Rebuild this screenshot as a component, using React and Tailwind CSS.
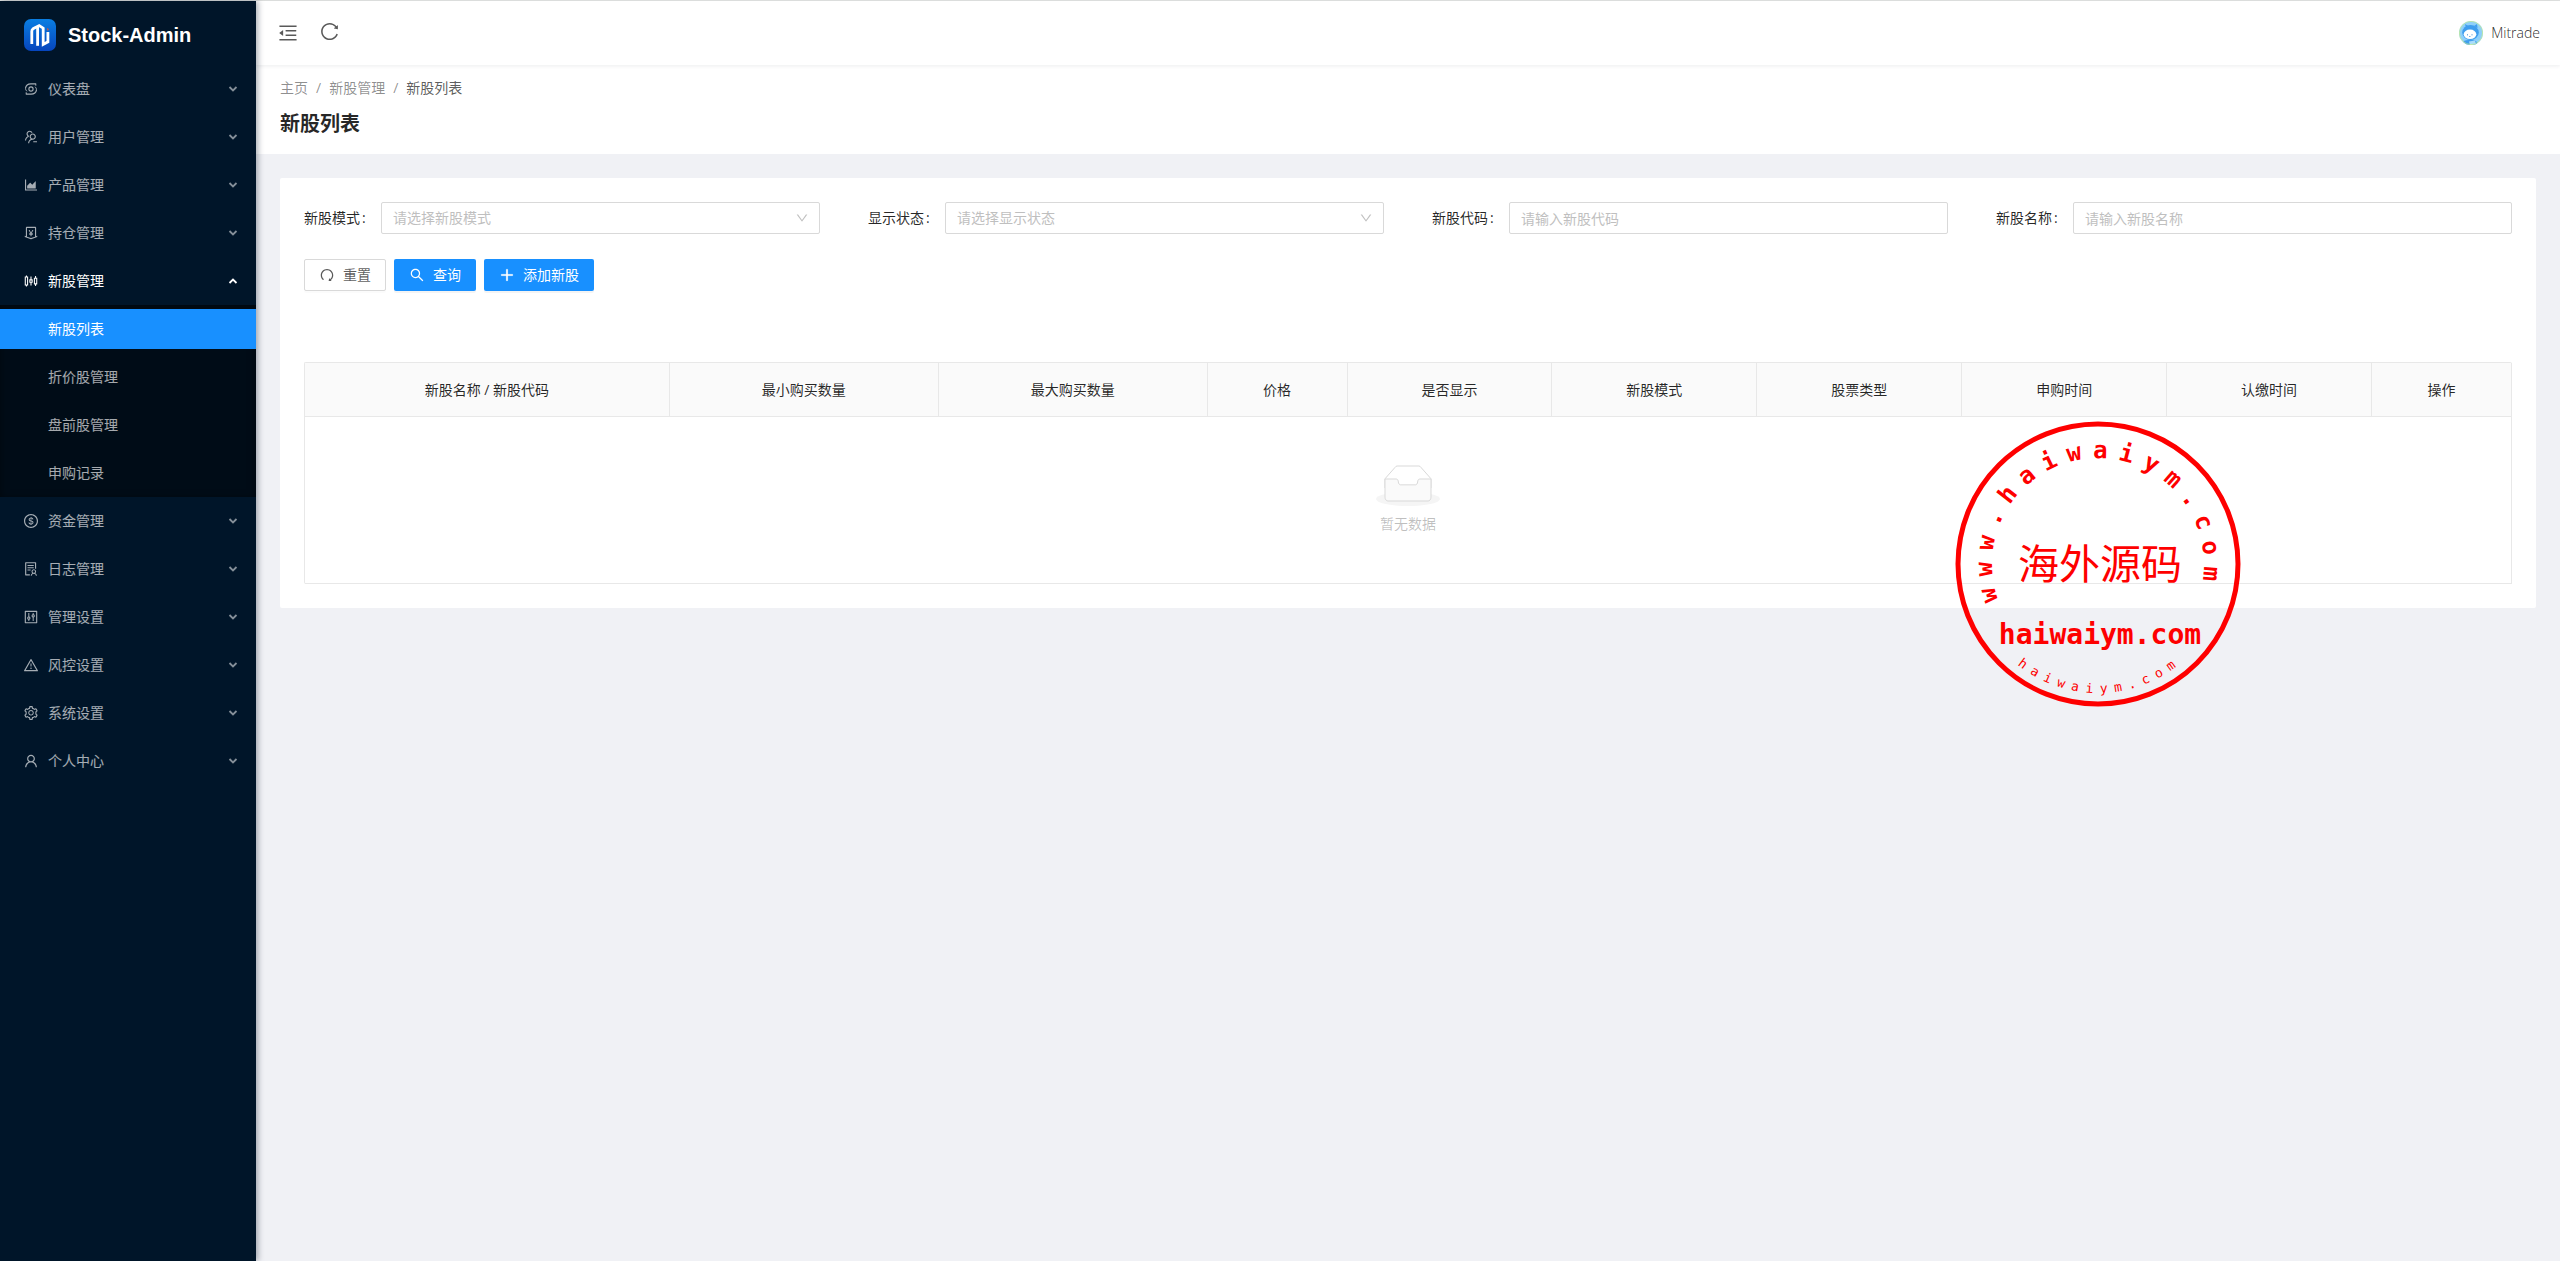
import React from 'react';
import {
  AiOutlineUsergroupDelete,
  AiOutlineAreaChart,
  AiOutlineMoneyCollect,
  AiOutlineSliders,
  AiOutlineDollar,
  AiOutlineSolution,
  AiOutlineControl,
  AiOutlineWarning,
  AiOutlineSetting,
  AiOutlineUser,
  AiOutlineMenuFold,
  AiOutlineReload,
  AiOutlineRedo,
  AiOutlineSearch,
  AiOutlinePlus,
  AiOutlineDown,
} from 'react-icons/ai';

function CycleIcon({ className }) {
  return (
    <svg viewBox="0 0 16 16" className={className} fill="none" stroke="currentColor" aria-hidden="true">
      <circle cx="8" cy="8" r="2.100" strokeWidth="1.100" />
      <path d="M2.500 7.200C2.900 4.500 5.200 2.900 7.900 2.900H13.200M12.600 2.400L12.900 4.600" strokeWidth="1.100" />
      <path d="M13.500 8.800C13.100 11.500 10.800 13.100 8.100 13.100H2.800M3.400 13.600L3.100 11.400" strokeWidth="1.100" />
      <path d="M2.500 7.200C2.500 8.500 3 9.500 3.900 10.300M13.500 8.800C13.500 7.500 13 6.500 12.100 5.700" strokeWidth="0.900" />
    </svg>
  );
}

const MENU = [
  { label: '仪表盘', Icon: CycleIcon },
  { label: '用户管理', Icon: AiOutlineUsergroupDelete },
  { label: '产品管理', Icon: AiOutlineAreaChart },
  { label: '持仓管理', Icon: AiOutlineMoneyCollect },
  {
    label: '新股管理',
    Icon: AiOutlineSliders,
    children: ['新股列表', '折价股管理', '盘前股管理', '申购记录'],
  },
  { label: '资金管理', Icon: AiOutlineDollar },
  { label: '日志管理', Icon: AiOutlineSolution },
  { label: '管理设置', Icon: AiOutlineControl },
  { label: '风控设置', Icon: AiOutlineWarning },
  { label: '系统设置', Icon: AiOutlineSetting },
  { label: '个人中心', Icon: AiOutlineUser },
];

const COLUMNS = [
  ['新股名称 / 新股代码', 365],
  ['最小购买数量', 269],
  ['最大购买数量', 269],
  ['价格', 140],
  ['是否显示', 205],
  ['新股模式', 205],
  ['股票类型', 205],
  ['申购时间', 205],
  ['认缴时间', 205],
  ['操作', 140],
];
const TOTAL = COLUMNS.reduce((sum, c) => sum + c[1], 0);

function Logo() {
  return (
    <svg viewBox="0 0 32 32" className="size-8 shrink-0" aria-hidden="true">
      <defs>
        <linearGradient id="logo" x1="0" y1="0" x2="0" y2="1">
          <stop offset="0" stopColor="#0a7ee2" />
          <stop offset="1" stopColor="#0645bd" />
        </linearGradient>
      </defs>
      <rect width="32" height="32" rx="7" fill="url(#logo)" />
      <g fill="none" stroke="#fff" strokeWidth="2.8">
        <path d="M7.800 25V12.200Q7.800 10.600 9 9.800L15.200 6.600L19.200 9.200V25.400L23.900 22.800V13" />
        <path d="M13.600 26.800V8" />
      </g>
      <path d="M22.800 9l2 1-1 2.200z" fill="#e8552d" />
    </svg>
  );
}

function Avatar() {
  return (
    <svg viewBox="0 0 24 24" className="size-6 shrink-0" aria-hidden="true">
      <defs>
        <clipPath id="avatar">
          <circle cx="12" cy="12" r="12" />
        </clipPath>
      </defs>
      <g clipPath="url(#avatar)">
        <rect width="24" height="24" fill="#8fd0fa" />
        <path d="M4 21c2-2 4-2 8-2s5 1 7 3l-3 3H6z" fill="#3f9eee" />
        <path d="M7 7L6 3l4 2.400zM15 5l3-2 .5 4z" fill="#3f9eee" />
        <ellipse cx="11.500" cy="11.500" rx="8.300" ry="7.500" fill="#3f9eee" />
        <ellipse cx="11" cy="13.300" rx="6.300" ry="4.800" fill="#fff" />
        <path d="M8.500 13v1.500M13 13v1.500M10 15.500h1.500" stroke="#5b9ad6" strokeWidth="0.8" />
        <path d="M10 20.500l6-1 1 4-6 1z" fill="#a9dcfb" />
      </g>
      <circle cx="12" cy="12" r="11.600" fill="none" stroke="#c9ee8a" strokeWidth="0.7" />
    </svg>
  );
}

function Caret({ up }) {
  return (
    <svg viewBox="0 0 10 6" className={'ml-auto h-1.5 w-2.5 ' + (up ? '' : 'opacity-80')} aria-hidden="true">
      <path
        d={up ? 'M1.500 5L5 1.500L8.500 5' : 'M1.500 1L5 4.500L8.500 1'}
        fill="none"
        stroke="currentColor"
        strokeWidth="1.8"
      />
    </svg>
  );
}

function Sidebar() {
  return (
    <aside className="z-10 w-64 shrink-0 bg-[#001529] text-white/65 shadow-[2px_0_6px_rgba(0,21,41,0.35)]">
      <a href="#home" className="flex h-16 items-center gap-3 px-6 pt-1 text-white">
        <Logo />
        <span className="font-['Liberation_Sans',sans-serif] text-xl font-bold">Stock-Admin</span>
      </a>
      <nav>
        <ul>
          {MENU.map(({ label, Icon, children }) => (
            <li key={label} className="flex flex-col">
              <button
                type="button"
                aria-expanded={Boolean(children)}
                className={
                  'my-1 flex h-10 w-full items-center gap-[9px] pr-[18px] pl-[23px] ' +
                  (children ? 'text-white' : '')
                }
              >
                <Icon className="size-4" />
                <span>{label}</span>
                <Caret up={Boolean(children)} />
              </button>
              {children && (
                <ul className="flex flex-col gap-2 bg-[#000c17] py-1 shadow-[inset_0_2px_8px_rgba(0,0,0,0.45)]">
                  {children.map((c, i) => (
                    <li key={c}>
                      <a
                        href={'#menu-' + i}
                        className={
                          'flex h-10 items-center pl-12 ' + (i === 0 ? 'bg-[#1890ff] text-white' : '')
                        }
                      >
                        {c}
                      </a>
                    </li>
                  ))}
                </ul>
              )}
            </li>
          ))}
        </ul>
      </nav>
    </aside>
  );
}

function Field({ id, label, placeholder, select }) {
  const box =
    'h-8 w-full rounded-xs border border-[#d9d9d9] bg-white px-[11px] text-sm outline-none';
  return (
    <div className="flex h-8 items-center">
      <label htmlFor={id} className="flex w-[77px] shrink-0 gap-0.5 text-black/85">
        {label}
        <span>:</span>
      </label>
      <div className="relative min-w-0 flex-1">
        {select ? (
          <>
            <select id={id} defaultValue="" className={box + ' appearance-none text-[#bfbfbf]'}>
              <option value="">{placeholder}</option>
            </select>
            <AiOutlineDown className="pointer-events-none absolute top-[9px] right-[11px] size-3.5 text-black/25" />
          </>
        ) : (
          <input id={id} type="text" placeholder={placeholder} className={box + ' placeholder:text-[#bfbfbf]'} />
        )}
      </div>
    </div>
  );
}

function Toolbar() {
  const primary =
    'flex h-8 items-center gap-2 rounded-xs bg-[#1890ff] px-[15px] text-white shadow-[0_2px_0_rgba(0,0,0,0.045)]';
  return (
    <div className="mt-[25px] flex gap-2">
      <button
        type="button"
        className="flex h-8 items-center gap-2 rounded-xs border border-[#d9d9d9] bg-white px-3.5 text-black/65 shadow-[0_2px_0_rgba(0,0,0,0.015)]"
      >
        <AiOutlineRedo className="size-4" />
        重置
      </button>
      <button type="button" className={primary}>
        <AiOutlineSearch className="size-4" />
        查询
      </button>
      <button type="button" className={primary}>
        <AiOutlinePlus className="size-4" stroke="currentColor" strokeWidth="40" />
        添加新股
      </button>
    </div>
  );
}

function EmptyBox() {
  return (
    <svg width="64" height="41" viewBox="0 0 64 41" aria-hidden="true">
      <g transform="translate(0 1)" fill="none" fillRule="evenodd">
        <ellipse fill="#F5F5F5" cx="32" cy="33" rx="32" ry="7" />
        <g fillRule="nonzero" stroke="#D9D9D9">
          <path d="M55 12.76L44.854 1.258C44.367.474 43.656 0 42.907 0H21.093c-.749 0-1.46.474-1.947 1.257L9 12.761V22h46v-9.24z" />
          <path
            d="M41.613 15.931c0-1.605.994-2.93 2.227-2.931H55v18.137C55 33.26 53.68 35 52.05 35h-40.1C10.32 35 9 33.259 9 31.137V13h11.16c1.233 0 2.227 1.323 2.227 2.928v.022c0 1.605 1.005 2.901 2.237 2.901h14.752c1.232 0 2.237-1.308 2.237-2.913v-.007z"
            fill="#FAFAFA"
          />
        </g>
      </g>
    </svg>
  );
}

function StockTable() {
  return (
    <table className="mt-[71px] w-full table-fixed border-separate border-spacing-0 rounded-xs border-t border-l border-[#e8e8e8]">
      <colgroup>
        {COLUMNS.map(([name, w]) => (
          <col key={name} style={{ width: (w / TOTAL) * 100 + '%' }} />
        ))}
      </colgroup>
      <thead>
        <tr>
          {COLUMNS.map(([name]) => (
            <th
              key={name}
              scope="col"
              className="h-[54px] border-r border-b border-[#e8e8e8] bg-[#fafafa] text-center font-normal text-black/85"
            >
              {name}
            </th>
          ))}
        </tr>
      </thead>
      <tbody>
        <tr>
          <td colSpan={COLUMNS.length} className="border-r border-b border-[#e8e8e8] py-12">
            <div className="flex flex-col items-center gap-[7px] text-black/25">
              <EmptyBox />
              暂无数据
            </div>
          </td>
        </tr>
      </tbody>
    </table>
  );
}

// Start points and rotations for monospaced characters set round a circle.
// Angles are in degrees clockwise from the top; "inward" turns the tops to the centre.
function around(text, radius, start, step, size, inward) {
  const xs = [];
  const ys = [];
  const turns = [];
  [...text].forEach((_, i) => {
    const deg = start + i * step;
    const a = (deg * Math.PI) / 180;
    const turn = inward ? deg - 180 : deg;
    const t = (turn * Math.PI) / 180;
    xs.push((radius * Math.sin(a) - Math.cos(t) * size * 0.3).toFixed(2));
    ys.push((-radius * Math.cos(a) - Math.sin(t) * size * 0.3).toFixed(2));
    turns.push(turn.toFixed(2));
  });
  return { x: xs.join(' '), y: ys.join(' '), rotate: turns.join(' ') };
}

function Stamp() {
  return (
    <svg
      viewBox="-143 -143 286 286"
      className="pointer-events-none absolute top-[420px] right-[319px] z-20 size-[286px] font-['DejaVu_Sans_Mono','Noto_Sans_CJK_SC',monospace]"
      fill="#fe0000"
    >
      <circle r="140" fill="none" stroke="#fe0000" strokeWidth="5" />
      <text fontSize="24" fontWeight="700" {...around('www.haiwaiym.com', 106, -106, 13.4, 24, false)}>
        www.haiwaiym.com
      </text>
      <text x="2" y="15" fontSize="41" textAnchor="middle">
        海外源码
      </text>
      <text x="2" y="80" fontSize="28" fontWeight="700" textAnchor="middle">
        haiwaiym.com
      </text>
      <text fontSize="13" {...around('haiwaiym.com', 129, 217, -6.6, 13, true)}>
        haiwaiym.com
      </text>
    </svg>
  );
}

export default function App() {
  return (
    <div className="relative flex min-h-screen border-t border-[#dfe1e0] bg-[#f0f1f5] font-['Open_Sans','Noto_Sans_CJK_SC',sans-serif] text-sm leading-[22px]">
      <Sidebar />
      <div className="flex min-w-0 flex-1 flex-col">
        <header className="z-[1] flex h-16 items-center bg-white pr-5 pl-[21px] shadow-[0_1px_4px_rgba(0,21,41,0.08)]">
          <button type="button" aria-label="收起菜单" className="text-black/65">
            <AiOutlineMenuFold className="size-[22px]" />
          </button>
          <button type="button" aria-label="刷新" className="ml-5 pb-1 text-black/65">
            <AiOutlineReload className="size-[21px]" />
          </button>
          <button type="button" className="ml-auto flex items-center gap-2 font-light text-black/85">
            <Avatar />
            Mitrade
          </button>
        </header>
        <div className="bg-white px-6 pt-3 pb-3.5">
          <nav aria-label="面包屑" className="flex gap-2 text-black/45">
            <a href="#home">主页</a>
            <span>/</span>
            <a href="#stocks">新股管理</a>
            <span>/</span>
            <span className="text-black/65">新股列表</span>
          </nav>
          <h1 className="mt-[9px] text-xl leading-8 font-semibold text-black/85">新股列表</h1>
        </div>
        <main className="m-6 rounded-xs bg-white p-6">
          <form>
            <div className="grid grid-cols-4 gap-12">
              <Field id="mode" label="新股模式" placeholder="请选择新股模式" select />
              <Field id="status" label="显示状态" placeholder="请选择显示状态" select />
              <Field id="code" label="新股代码" placeholder="请输入新股代码" />
              <Field id="name" label="新股名称" placeholder="请输入新股名称" />
            </div>
            <Toolbar />
          </form>
          <StockTable />
        </main>
      </div>
      <Stamp />
    </div>
  );
}
